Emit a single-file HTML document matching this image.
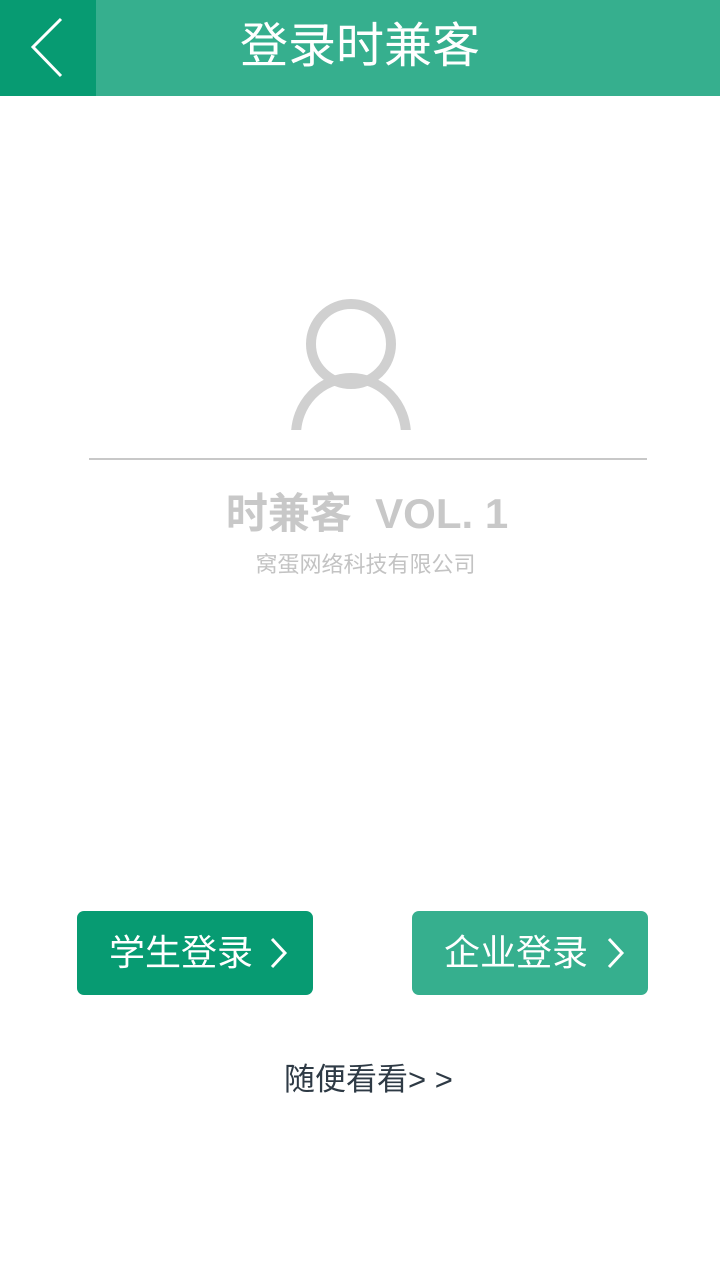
<!DOCTYPE html>
<html><head><meta charset="utf-8"><style>
body{margin:0;width:720px;height:1280px;background:#fff;position:relative;overflow:hidden;font-family:"Liberation Sans","Noto Sans CJK SC",sans-serif}
.hdr{position:absolute;left:0;top:0;width:720px;height:96px;background:#36af8e}
.back{position:absolute;left:0;top:0;width:96px;height:96px;background:#079b72}
.title{position:absolute;left:0;width:720px;top:17px;text-align:center;color:#fff;font-size:48px;line-height:60px}
.line{position:absolute;left:89px;top:458px;width:558px;height:2px;background:#c8c8c8}
.t1{position:absolute;left:0;width:734px;top:488px;text-align:center;color:#c8c8c8;font-size:42px;font-weight:bold;line-height:52px}
.t2{position:absolute;left:0;width:731px;top:550px;text-align:center;color:#c3c3c3;font-size:22px;line-height:30px}
.btn{position:absolute;top:911px;width:236px;height:84px;border-radius:7px;color:#fff;font-size:36px;line-height:84px}
.more{position:absolute;left:284px;top:1058px;font-size:31px;color:#2e3a45;line-height:44px}
</style></head><body>
<div class="hdr"><div class="back"><svg width="96" height="96"><polyline points="61,19 33,47 61,76" fill="none" stroke="#fff" stroke-width="3"/></svg></div>
<div class="title">登录时兼客</div></div>
<svg style="position:absolute;left:285px;top:295px" width="135" height="135"><circle cx="66" cy="49" r="40" fill="none" stroke="#d0d0d0" stroke-width="10"/><path d="M11 140 A55 57 0 0 1 121 140" fill="none" stroke="#d0d0d0" stroke-width="10"/></svg>
<div class="line"></div>
<div class="t1">时兼客&nbsp; VOL. 1</div>
<div class="t2">窝蛋网络科技有限公司</div>
<div class="btn" style="left:77px;background:#079b72"><span style="position:absolute;left:32px">学生登录</span><svg style="position:absolute;left:192px;top:26px" width="20" height="32"><polyline points="3,2 16,16 3,30" fill="none" stroke="#fff" stroke-width="3"/></svg></div>
<div class="btn" style="left:412px;background:#36af8e"><span style="position:absolute;left:32px">企业登录</span><svg style="position:absolute;left:194px;top:26px" width="20" height="32"><polyline points="3,2 16,16 3,30" fill="none" stroke="#fff" stroke-width="3"/></svg></div>
<div class="more">随便看看&gt; &gt;</div>
</body></html>
